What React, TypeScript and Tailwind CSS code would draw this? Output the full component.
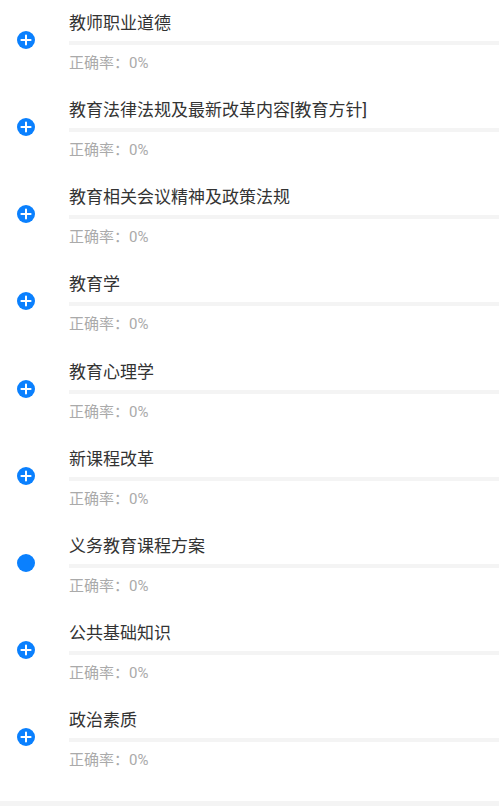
import React from "react";

const items = [
  { t: "教师职业道德", plus: true },
  { t: "教育法律法规及最新改革内容[教育方针]", plus: true },
  { t: "教育相关会议精神及政策法规", plus: true },
  { t: "教育学", plus: true },
  { t: "教育心理学", plus: true },
  { t: "新课程改革", plus: true },
  { t: "义务教育课程方案", plus: false },
  { t: "公共基础知识", plus: true },
  { t: "政治素质", plus: true },
];

function Icon({ plus }: { plus: boolean }) {
  return (
    <svg width="18" height="18" viewBox="0 0 18 18">
      <circle cx="9" cy="9" r="9" fill="#0a80fe" />
      {plus && (
        <path d="M9 4.4v9.2M4.4 9h9.2" stroke="#fff" strokeWidth="2" strokeLinecap="round" />
      )}
    </svg>
  );
}

export default function App() {
  return (
    <div
      className="w-[499px] h-[806px] bg-[#f4f4f4]"
      style={{ fontFamily: 'Roboto, "Noto Sans CJK SC", sans-serif' }}
    >
      <div className="bg-white pb-[17px]">
        {items.map((it, i) => (
          <div key={i} className="flex h-[87.125px]">
            <div className="w-[69px] shrink-0 pl-[17px] pt-[31px]">
              <Icon plus={it.plus} />
            </div>
            <div className="flex-1 pt-[11px]">
              <div className="h-[24px] text-[17px] leading-[24px] text-[#333333]">{it.t}</div>
              <div className="mt-[6px] h-[4px] bg-[#f4f4f4]" />
              <div className="mt-[8px] h-[21px] text-[15px] leading-[21px] text-[#aaaaaa]">正确率：0%</div>
            </div>
          </div>
        ))}
      </div>
    </div>
  );
}
